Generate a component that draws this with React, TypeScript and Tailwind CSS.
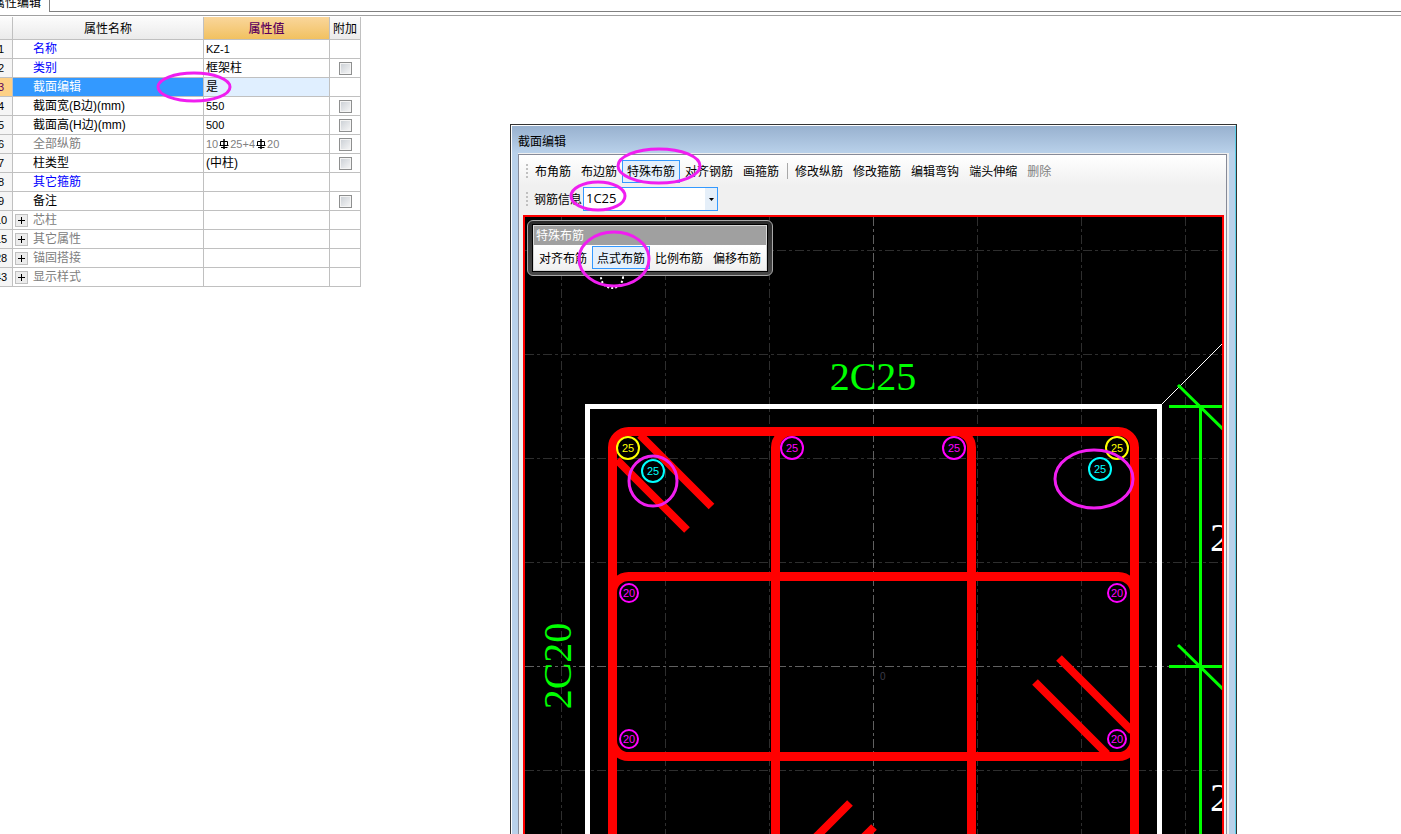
import clsx from "clsx";

type Row = {
  no: string;
  name: string;
  value?: string;
  check?: boolean;
  color?: string;
  group?: boolean;
  selected?: boolean;
};

const rows: Row[] = [
  { no: "1", name: "名称", value: "KZ-1", color: "text-[#0000ff]" },
  { no: "2", name: "类别", value: "框架柱", check: true, color: "text-[#0000ff]" },
  { no: "3", name: "截面编辑", value: "是", color: "text-white", selected: true },
  { no: "4", name: "截面宽(B边)(mm)", value: "550", check: true },
  { no: "5", name: "截面高(H边)(mm)", value: "500", check: true },
  { no: "6", name: "全部纵筋", value: "rebar", check: true, color: "text-[#808080]" },
  { no: "7", name: "柱类型", value: "(中柱)", check: true },
  { no: "8", name: "其它箍筋", color: "text-[#0000ff]" },
  { no: "9", name: "备注", check: true },
  { no: "10", name: "芯柱", color: "text-[#808080]", group: true },
  { no: "15", name: "其它属性", color: "text-[#808080]", group: true },
  { no: "28", name: "锚固搭接", color: "text-[#808080]", group: true },
  { no: "43", name: "显示样式", color: "text-[#808080]", group: true },
];

const drawTools = ["布角筋", "布边筋", "特殊布筋", "对齐钢筋", "画箍筋"];
const editTools = ["修改纵筋", "修改箍筋", "编辑弯钩", "端头伸缩", "删除"];
const layoutTools = ["对齐布筋", "点式布筋", "比例布筋", "偏移布筋"];

const gridX = [561, 665, 769, 977, 1081, 1185];
const gridY = [250, 354, 458, 562, 770];

const bars = [
  { x: 628, y: 448, d: 25, color: "#ffff00" },
  { x: 1117, y: 448, d: 25, color: "#ffff00" },
  { x: 653, y: 471, d: 25, color: "#00ffff" },
  { x: 1100, y: 469, d: 25, color: "#00ffff" },
  { x: 792, y: 448, d: 25, color: "#ff00ff" },
  { x: 954, y: 448, d: 25, color: "#ff00ff" },
  { x: 629, y: 593, d: 20, color: "#ff00ff" },
  { x: 1117, y: 593, d: 20, color: "#ff00ff" },
  { x: 629, y: 739, d: 20, color: "#ff00ff" },
  { x: 1117, y: 739, d: 20, color: "#ff00ff" },
];

const marks = [
  { cx: 194, cy: 87, rx: 36, ry: 14 },
  { cx: 659, cy: 166, rx: 41, ry: 17 },
  { cx: 598, cy: 196, rx: 27, ry: 14 },
  { cx: 614, cy: 259, rx: 35, ry: 27 },
  { cx: 653, cy: 481, rx: 24, ry: 25 },
  { cx: 1094, cy: 479, rx: 39, ry: 29 },
];

// grade III rebar sign
function RebarSign() {
  return (
    <svg className="mx-px inline-block h-[10px] w-[10px] align-[-1px]" viewBox="0 0 10 10" fill="none" stroke="#000">
      <path d="M5 0v10" strokeWidth="1.5" />
      <path d="M2 2.500h6.500v4H1.500v-4zM0.500 6.500h9M2 8.500h6.500" />
    </svg>
  );
}

function ToolButton({ label, active, disabled }: { label: string; active?: boolean; disabled?: boolean }) {
  return (
    <button
      type="button"
      disabled={disabled}
      className={clsx(
        "h-[23px] shrink-0 border px-1 pt-0.5 text-xs whitespace-nowrap",
        active ? "border-[#3399ff] bg-[#e4f0fc]" : "border-transparent",
        disabled ? "text-[#808080]" : "text-black"
      )}
    >
      {label}
    </button>
  );
}

function Grip() {
  return (
    <span className="mr-0.5 flex w-0.5 shrink-0 flex-col gap-0.5">
      <i className="size-0.5 bg-[#c0c0c0]" />
      <i className="size-0.5 bg-[#c0c0c0]" />
      <i className="size-0.5 bg-[#c0c0c0]" />
      <i className="size-0.5 bg-[#c0c0c0]" />
    </span>
  );
}

function PropertyTable() {
  return (
    <div className="w-[361px] overflow-hidden">
      <table className="-ml-[10px] w-[371px] table-fixed border-separate border-spacing-0 text-xs text-black">
        <colgroup>
          <col className="w-[23px]" />
          <col className="w-[191px]" />
          <col className="w-[126px]" />
          <col className="w-[31px]" />
        </colgroup>
        <thead>
          <tr className="h-[23px] bg-linear-to-b from-[#fcfcfc] to-[#eaeaea]">
            <th className="border-r border-b border-[#c0c0c0] p-0" />
            <th className="border-r border-b border-[#c0c0c0] p-0 pt-0.5 font-normal">属性名称</th>
            <th className="border-r border-b border-[#c0c0c0] bg-linear-to-b from-[#fad69a] to-[#f1c15f] p-0 pt-0.5 font-medium text-[#5c005c]">
              属性值
            </th>
            <th className="border-r border-b border-[#c0c0c0] p-0 pt-0.5 font-normal">附加</th>
          </tr>
        </thead>
        <tbody>
          {rows.map((row) => (
            <tr key={row.no} className="h-[19px] leading-[18px]">
              <td
                className={clsx(
                  "border-r border-b border-[#c0c0c0] p-0 text-center text-[11px]",
                  row.selected ? "bg-[#fdd085] text-[#5c005c]" : "bg-[#f5f5f5]"
                )}
              >
                {row.no}
              </td>
              <td className={clsx("border-r border-b border-[#c0c0c0] p-0", row.selected && "bg-[#3399ff]", row.color)}>
                <div className="flex items-center pl-0.5">
                  <span className="w-[18px]">
                    {row.group && (
                      <button
                        type="button"
                        aria-label={`展开${row.name}`}
                        className="flex size-[13px] items-center justify-center border border-[#c0c0c0] bg-[#ececec] text-black"
                      >
                        <svg width="7" height="7" viewBox="0 0 7 7" stroke="currentColor">
                          <path d="M0 3.5h7M3.5 0v7" />
                        </svg>
                      </button>
                    )}
                  </span>
                  {row.name}
                </div>
              </td>
              <td className={clsx("border-r border-b border-[#c0c0c0] p-0 pl-0.5", row.selected && "bg-[#e0efff]")}>
                {row.value === "rebar" ? (
                  <span className="block text-[11px] text-[#808080]">
                    10
                    <RebarSign />
                    25+4
                    <RebarSign />
                    20
                  </span>
                ) : (
                  <span className={clsx("block", /^\w/.test(row.value ?? "") && "text-[11px]")}>{row.value}</span>
                )}
              </td>
              <td className="border-r border-b border-[#c0c0c0] p-0">
                {row.check && (
                  <input
                    type="checkbox"
                    aria-label={`${row.name} 附加`}
                    className="mx-auto block size-[13px] appearance-none border border-[#8e8f8f] bg-linear-to-br from-[#c9ced4] to-[#f8f8f8] shadow-[inset_0_0_0_1px_#f4f4f4]"
                  />
                )}
              </td>
            </tr>
          ))}
        </tbody>
      </table>
    </div>
  );
}

function SectionDrawing() {
  return (
    <svg className="absolute inset-0 size-full font-['Liberation_Sans',sans-serif]" fill="none">
      <g transform="translate(-525 -217)">
        <g stroke="#2e2e2e" strokeDasharray="9 3 3 3" shapeRendering="crispEdges">
          {gridX.map((x) => (
            <path key={x} d={`M${x + 0.5} 217V834`} />
          ))}
          {gridY.map((y) => (
            <path key={y} d={`M525 ${y + 0.5}H1222`} />
          ))}
          <path stroke="#606060" d="M873.5 217V834M525 666.5H1222" />
        </g>

        <text x="880" y="680" fontSize="10" fill="#3c3c48">0</text>

        <path d="M1162 404L1222 344" stroke="#fff" shapeRendering="crispEdges" />
        <path d="M587.5 860V406.500H1159.500V860" stroke="#fff" strokeWidth="5" />

        {/* stirrups */}
        <g stroke="#f00" strokeWidth="9">
          <path d="M612.5 860V447.500a16 16 0 0 1 16-16H1118.500a16 16 0 0 1 16 16V860" />
          <path d="M775.5 860V447.500a16 16 0 0 1 16-16H955.500a16 16 0 0 1 16 16V860" />
          <path d="M628.5 576.500H1118.500a16 16 0 0 1 16 16V740.500a16 16 0 0 1-16 16H628.500a16 16 0 0 1-16-16V592.500a16 16 0 0 1 16-16z" />
        </g>
        <g stroke="#f00" strokeWidth="8">
          <path d="M640 435L711.500 506.500M617 460L687 530" />
          <path d="M1059 658L1132 731M1035 682L1107 754" />
          <path d="M850 803L800 853M874 827L840 861" />
        </g>

        {/* dimension lines */}
        <g stroke="#0f0" strokeWidth="3">
          <path d="M1200.5 406V834M1169 406.500H1222M1169 666.500H1222" />
          <path d="M1178 385L1224 430M1178 645L1224 690" />
        </g>

        {bars.map((bar) => (
          <g key={`${bar.x}-${bar.y}`}>
            <circle cx={bar.x} cy={bar.y} r={bar.d === 25 ? 11 : 9} stroke={bar.color} strokeWidth="2" />
            <text x={bar.x} y={bar.y + 4} fontSize="11" textAnchor="middle" fill={bar.color}>
              {bar.d}
            </text>
          </g>
        ))}

        <circle cx="612" cy="277" r="11" stroke="#fff" strokeWidth="2" strokeDasharray="2 2" />

        <g className="font-['Liberation_Serif',serif]" fontSize="40">
          <text x="873" y="390" textAnchor="middle" fill="#0f0">2C25</text>
          <text transform="translate(571 666) rotate(-90)" textAnchor="middle" fill="#0f0">2C20</text>
          <text x="1210" y="551" fill="#fff">2</text>
          <text x="1210" y="811" fill="#fff">2</text>
        </g>
      </g>
    </svg>
  );
}

function SectionWindow() {
  return (
    <section className="absolute top-[124px] bottom-0 left-[510px] flex w-[727px] flex-col border border-b-0 border-[#333] bg-[#b9d1ea] text-xs text-black">
      <div className="flex min-h-0 flex-1 flex-col border-t border-r border-l border-t-white border-r-[#5cd0e8] border-l-white">
        <h1 className="h-[27px] shrink-0 bg-linear-to-b from-[#98b1cf] to-[#b9d1ea] pl-1.5 leading-[32px]">截面编辑</h1>
        <div className="mr-1.5 ml-1.5 flex min-h-0 flex-1 flex-col border-t border-r-2 border-[#f0f0f0]">
          <div className="flex min-h-0 flex-1 flex-col border border-b-0 border-[#868a98] bg-[#f0f0f0]">
            <div className="shrink-0 bg-linear-to-b from-white via-[#f0f0f0] to-[#f0f0f0] py-0.5 pl-[7px]">
              <div className="flex h-7 items-center">
                <Grip />
                {drawTools.map((label) => (
                  <ToolButton key={label} label={label} active={label === "特殊布筋"} />
                ))}
                <span className="flex w-1.5 shrink-0 justify-center">
                  <i className="h-4 w-px bg-[#a8a8a8]" />
                </span>
                {editTools.map((label) => (
                  <ToolButton key={label} label={label} disabled={label === "删除"} />
                ))}
              </div>
              <div className="flex h-7 items-center">
                <Grip />
                <label htmlFor="rebar-info" className="ml-1 w-[49px] shrink-0 pt-0.5">
                  钢筋信息
                </label>
                <div className="relative">
                  <select
                    id="rebar-info"
                    className="block h-6 w-[135px] appearance-none border border-[#3399ff] bg-white pl-0.5 font-['Open_Sans','Noto_Sans_CJK_SC',sans-serif] text-[13px]"
                  >
                    <option>1C25</option>
                  </select>
                  <span className="pointer-events-none absolute inset-y-px right-px flex w-3 items-center justify-center bg-[#e5eff9]">
                    <svg width="5" height="3" viewBox="0 0 5 3">
                      <path d="M0 0h5L2.500 3z" />
                    </svg>
                  </span>
                </div>
              </div>
            </div>
            <div className="relative mr-0.5 ml-1 min-h-0 flex-1 overflow-hidden border-2 border-b-0 border-[#f00] bg-black">
              <SectionDrawing />
              <div className="absolute top-[3px] left-0.5 rounded-md border border-[#a8a8a8] bg-linear-to-b from-[#2a2a2a] to-[#484848] px-[5px] py-1">
                <div className="border border-[#d8d8d8] bg-[#f4f4f4] shadow-[0_0_0_1px_#000]">
                  <h2 className="h-[19px] bg-[#a0a0a0] pl-0.5 leading-[20px] text-white">特殊布筋</h2>
                  <div className="flex h-[25px] items-center bg-linear-to-b from-white to-[#f0f0f0]">
                    {layoutTools.map((label) => (
                      <ToolButton key={label} label={label} active={label === "点式布筋"} />
                    ))}
                  </div>
                </div>
              </div>
            </div>
          </div>
        </div>
      </div>
    </section>
  );
}

export default function App() {
  return (
    <main className="relative h-screen overflow-hidden bg-white font-['Liberation_Sans','Noto_Sans_CJK_SC',sans-serif]">
      <div className="flex h-4 border-b border-[#a0a0a0] text-xs">
        <div className="flex h-3 w-[50px] shrink-0 items-end justify-end overflow-hidden border-r border-[#808080] pr-2 leading-[18px] whitespace-nowrap">
          属性编辑
        </div>
        <div className="h-3 flex-1 border-b border-[#808080]" />
      </div>
      <div className="pt-px">
        <PropertyTable />
      </div>
      <SectionWindow />
      <svg className="pointer-events-none absolute inset-0 size-full" fill="none" stroke="#f01ef0" strokeWidth="3">
        {marks.map((m) => (
          <ellipse key={m.cx} cx={m.cx} cy={m.cy} rx={m.rx} ry={m.ry} />
        ))}
      </svg>
    </main>
  );
}
